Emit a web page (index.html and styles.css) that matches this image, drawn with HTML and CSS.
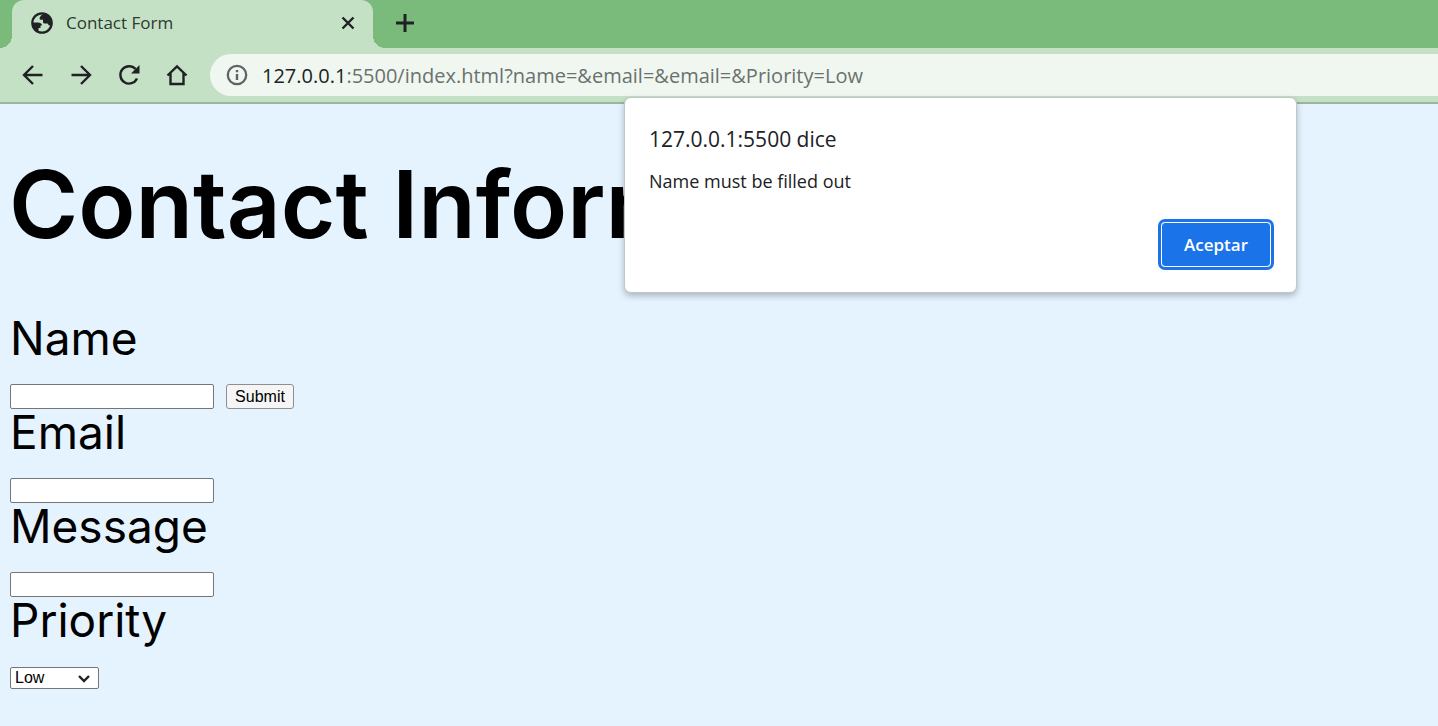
FILE: index.html
```html
<!DOCTYPE html>
<html lang="en">
<head>
<meta charset="utf-8">
<title>Contact Form</title>
<link rel="stylesheet" href="styles.css">
</head>
<body>
<header class="browser">
  <div class="tabstrip">
    <div class="tab">
      <svg class="favicon" viewBox="0 0 22 22" aria-hidden="true"><circle cx="11" cy="11" r="9.700" fill="none" stroke="#202124" stroke-width="2.200"/><path fill="#202124" d="M13 1.500L10 3.500 8.500 6c0 1.300.8 1.800 2 1.800h1.500V10c0 1.200 1 1.500 2 1.500h2.500l1.500 2h3C22 8 19 2 13 1.500zM1.500 10.500H7c2 0 4 1 4 3H9.500v2.500H7.500v4C4 19 1 15 1.500 10.500z"/></svg>
      <span class="tab-title">Contact Form</span>
      <button class="icon-button tab-close" aria-label="Close tab"><svg width="14" height="14" viewBox="0 0 14 14"><path class="stroke" d="M1.500 1.500l11 11M12.500 1.500l-11 11"/></svg></button>
    </div>
    <button class="icon-button new-tab" aria-label="New tab"><svg width="20" height="20" viewBox="0 0 20 20"><path class="stroke heavy" d="M10 1v18M1 10h18"/></svg></button>
  </div>
  <nav class="toolbar">
    <div class="nav-buttons">
      <button class="icon-button" aria-label="Back"><svg width="24" height="24" viewBox="0 0 24 24"><path class="stroke" d="M21.500 12H3.500M12 3l-9 9 9 9"/></svg></button>
      <button class="icon-button" aria-label="Forward"><svg width="24" height="24" viewBox="0 0 24 24"><path class="stroke" d="M2.500 12h18M12 3l9 9-9 9"/></svg></button>
      <button class="icon-button" aria-label="Reload"><svg width="24" height="24" viewBox="0 0 24 24"><path class="stroke" d="M20 15.500a8.700 8.700 0 1 1-1.500-9.500"/><path fill="#202124" d="M22.500 2v8.500H14z"/></svg></button>
      <button class="icon-button" aria-label="Home"><svg width="24" height="24" viewBox="0 0 24 24"><path class="stroke" d="M2.500 12.500L12 3.500l9.500 9M5.500 10v11h13V10"/></svg></button>
    </div>
    <div class="address">
      <svg width="22" height="22" viewBox="0 0 22 22" aria-hidden="true"><circle cx="11" cy="11" r="9.200" fill="none" stroke="#5f6368" stroke-width="2.300"/><path fill="#5f6368" d="M9.800 10h2.400v6H9.800zM9.800 6h2.400v2.300H9.800z"/></svg>
      <span class="url"><span class="host">127.0.0.1</span>:5500/index.html?name=&amp;email=&amp;email=&amp;Priority=Low</span>
    </div>
  </nav>
</header>
<main class="page">
  <h1 class="heading">Contact Information</h1>
  <form class="form">
    <label class="label" for="name">Name</label>
    <div class="row"><input class="field" id="name" type="text"><button class="submit" type="button">Submit</button></div>
    <label class="label" for="email">Email</label>
    <div class="row"><input class="field" id="email" type="text"></div>
    <label class="label" for="message">Message</label>
    <div class="row"><input class="field" id="message" type="text"></div>
    <label class="label" for="priority">Priority</label>
    <div class="select-box">
      <select class="select" id="priority"><option>Low</option><option>Medium</option><option>High</option></select>
      <svg class="chevron" width="14" height="10" viewBox="0 0 14 10" aria-hidden="true"><path class="stroke" d="M2 2l5 5 5-5"/></svg>
    </div>
  </form>
</main>
<section class="dialog" role="alertdialog" aria-labelledby="dialog-title" aria-describedby="dialog-text">
  <h2 class="dialog-title" id="dialog-title">127.0.0.1:5500 dice</h2>
  <p class="dialog-text" id="dialog-text">Name must be filled out</p>
  <button class="accept">Aceptar</button>
</section>
</body>
</html>
```
FILE: styles.css
```css
* { box-sizing: border-box; }
body {
  margin: 0;
  min-height: 100vh;
  background: #e5f3ff;
  color: #000;
  font-family: "Open Sans", "Noto Sans", sans-serif;
  overflow-x: hidden;
}
.stroke { fill: none; stroke: #202124; stroke-width: 2.4; }
.heavy { stroke-width: 3; }
.icon-button { display: flex; padding: 0; border: 0; background: none; }
.browser { background: #c5e1c5; border-bottom: 2px solid #9db39d; }
.tabstrip { display: flex; height: 48px; padding-left: 12px; background: #7abb7b; }
.tab {
  position: relative;
  display: flex;
  align-items: center;
  width: 361px;
  padding: 0 18px 3px 19px;
  background: #c5e1c5;
  border-radius: 12px 12px 0 0;
}
.tab::before, .tab::after {
  content: "";
  position: absolute;
  bottom: 0;
  width: 12px;
  height: 12px;
}
.tab::before { right: 100%; background: radial-gradient(circle at 0 0, #7abb7b 12px, #c5e1c5 12px); }
.tab::after { left: 100%; background: radial-gradient(circle at 100% 0, #7abb7b 12px, #c5e1c5 12px); }
.favicon { width: 22px; height: 22px; margin-right: 13px; }
.tab-title { flex: 1; font-size: 17px; color: #2c3a2f; }
.new-tab { align-items: center; margin-left: 22px; padding-bottom: 3px; }
.toolbar { display: flex; align-items: center; height: 54px; padding-left: 21px; }
.nav-buttons { display: flex; gap: 24px; margin-right: 21px; }
.address {
  display: flex;
  flex: 1;
  align-items: center;
  gap: 14px;
  height: 42px;
  padding-left: 16px;
  background: #f0f7f0;
  border-radius: 21px 0 0 21px;
}
.url { font-size: 20px; color: #6b716e; white-space: nowrap; }
.host { color: #202124; }
.page { padding: 38px 9px 40px; }
.heading {
  margin: 0;
  font: 600 94px/124px Inter, sans-serif;
  white-space: nowrap;
}
.form { display: flex; flex-direction: column; align-items: flex-start; padding: 49px 1px 0; }
.label { height: 69px; font: 400 46px/46px Inter, sans-serif; }
.row { display: flex; gap: 12px; height: 25px; }
.field { width: 204px; border: 1px solid #767676; border-radius: 2px; background: #fff; }
.submit {
  width: 68px;
  padding: 0;
  border: 1px solid #8f8f8f;
  border-radius: 3px;
  background: #f5f5f5;
  color: #000;
  font: 16px "Liberation Sans", sans-serif;
}
.select-box { position: relative; margin-top: 1px; }
.select {
  display: block;
  appearance: none;
  width: 89px;
  height: 22px;
  padding: 0 4px;
  border: 1px solid #767676;
  border-radius: 2px;
  background: #fff;
  color: #000;
  font: 16px/20px "Liberation Sans", sans-serif;
}
.chevron { position: absolute; right: 8px; top: 7px; pointer-events: none; }
.dialog {
  position: absolute;
  top: 97px;
  left: 624px;
  display: flex;
  flex-direction: column;
  width: 673px;
  padding: 27px 25px 25px 24px;
  background: #fff;
  border: 1px solid #bdc8c8;
  border-radius: 7px;
  box-shadow: 0 3px 6px rgba(0, 0, 0, 0.25);
  color: #202124;
}
.dialog-title { margin: 0 0 16px; font-size: 21px; font-weight: 400; line-height: 28px; }
.dialog-text { margin: 0 0 28px; font-size: 18px; line-height: 25px; }
.accept {
  align-self: flex-end;
  width: 110px;
  height: 45px;
  border: 1px solid #fff;
  border-radius: 4px;
  outline: 3px solid #1a73e8;
  background: #1a73e8;
  color: #fff;
  font: 600 17px "Open Sans", sans-serif;
}
```
